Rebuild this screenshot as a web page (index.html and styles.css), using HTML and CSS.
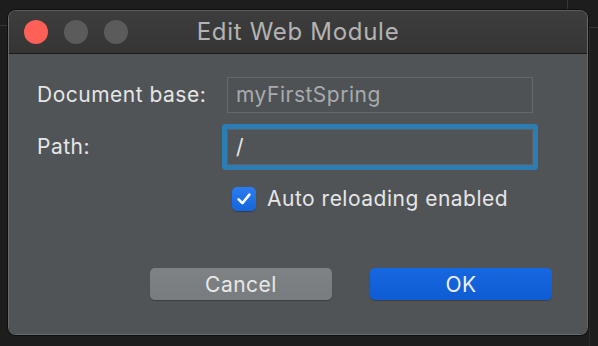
FILE: index.html
```html
<!DOCTYPE html>
<html lang="en">
<head>
  <meta charset="UTF-8">
  <title>Edit Web Module</title>
  <link rel="stylesheet" href="styles.css">
</head>
<body>
  <div class="backdrop">
    <div class="line line-left"></div>
    <div class="line line-top"></div>
    <div class="line line-right-h"></div>
    <div class="line line-right-v"></div>
  </div>

  <div class="window">
    <div class="titlebar">
      <div class="lights">
        <span class="light close"></span>
        <span class="light"></span>
        <span class="light"></span>
      </div>
      <div class="title">Edit Web Module</div>
    </div>

    <div class="body">
      <div class="form">
        <label class="label">Document base:</label>
        <div class="field readonly">myFirstSpring</div>

        <label class="label">Path:</label>
        <div class="field focused">/</div>

        <div class="check-row">
          <span class="checkbox">
            <svg width="18" height="18" viewBox="0 0 18 18">
              <path d="M3.6 9.4 L7.4 13.2 L14.4 4.6" fill="none" stroke="#fff" stroke-width="2.6" stroke-linecap="round" stroke-linejoin="round"/>
            </svg>
          </span>
          <span class="check-label">Auto reloading enabled</span>
        </div>
      </div>

      <div class="buttons">
        <button class="btn cancel">Cancel</button>
        <button class="btn ok">OK</button>
      </div>
    </div>
  </div>
</body>
</html>
```

FILE: styles.css
```css
* {
  box-sizing: border-box;
  margin: 0;
  padding: 0;
}

body {
  background-color: #1d1d1d;
  width: 598px;
  height: 346px;
  overflow: hidden;
  font-family: "Inter", "Liberation Sans", sans-serif;
  position: relative;
}

.backdrop {
  position: absolute;
  inset: 0;

  & > .line {
    position: absolute;
    background-color: #363636;
  }

  & > .line-left {
    left: 0;
    top: 25px;
    width: 8px;
    height: 1px;
  }

  & > .line-top {
    left: 567px;
    top: 0;
    width: 1px;
    height: 10px;
  }

  & > .line-right-h {
    left: 588px;
    top: 27px;
    width: 10px;
    height: 1px;
  }

  & > .line-right-v {
    left: 589px;
    top: 27px;
    width: 1px;
    height: 319px;
    background-color: #2a2a2a;
  }
}

.window {
  position: relative;
  margin: 10px 0 0 8px;
  width: 580px;
  height: 325px;
  border-radius: 8px;
  overflow: hidden;
  display: flex;
  flex-direction: column;
  box-shadow: 0 0 0 1px #0e0e0e;
  border: 1px solid #686b6d;
  border-top-color: #5c5c5c;

  & > .titlebar {
    height: 43px;
    flex-shrink: 0;
    background: linear-gradient(#3d3d3d, #353535);
    border-bottom: 1px solid #191919;
    display: flex;
    align-items: center;
    position: relative;

    & > .lights {
      display: flex;
      gap: 16px;
      padding-left: 15px;
      margin-top: -1px;

      & > .light {
        width: 24px;
        height: 24px;
        border-radius: 999px;
        background-color: #5b5b5b;
      }

      & > .close {
        background-color: #fe5f57;
      }
    }

    & > .title {
      position: absolute;
      left: 0;
      right: 0;
      text-align: center;
      font-size: 24px;
      color: #b3b3b3;
      letter-spacing: 0.7px;
      margin-top: -1px;
    }
  }

  & > .body {
    flex: 1;
    background-color: #505457;
    padding: 23px 35px 0 28px;
    display: flex;
    flex-direction: column;

    & > .form {
      display: grid;
      grid-template-columns: 190px 306px;
      row-gap: 16px;
      align-items: center;

      .label {
        font-size: 21px;
        letter-spacing: 0.5px;
        color: #e6e6e6;
        margin-top: -2px;
      }

      .field {
        height: 36px;
        border: 1px solid #65696c;
        padding: 0 8px;
        font-size: 21px;
        letter-spacing: 0.5px;
        line-height: 34px;
        color: #e8e8e8;
      }

      .readonly {
        color: #a9abad;
        background-color: #4e5255;
      }

      .focused {
        border-color: #5d6164;
        box-shadow: 0 0 0 5px #2b7db3;
        border-radius: 1px;
      }

      & > .check-row {
        grid-column: 2;
        display: flex;
        align-items: center;
        gap: 11px;
        padding-left: 5px;
        margin-top: 5px;

        & > .checkbox {
          width: 24px;
          height: 24px;
          border-radius: 5px;
          background: linear-gradient(#2a7cf0, #1566dc);
          display: flex;
          align-items: center;
          justify-content: center;
          box-shadow: 0 1px 1px rgba(0, 0, 0, 0.3);
        }

        & > .check-label {
          font-size: 21px;
          letter-spacing: 0.5px;
          color: #e6e6e6;
        }
      }
    }

    & > .buttons {
      display: flex;
      justify-content: flex-end;
      gap: 38px;
      margin-top: 57px;

      & > .btn {
        width: 182px;
        height: 32px;
        border: none;
        border-radius: 5px;
        font-family: "Inter", "Liberation Sans", sans-serif;
        font-size: 21px;
        letter-spacing: 0.5px;
        color: #e8e8e8;
        box-shadow: 0 1px 1px rgba(0, 0, 0, 0.25);
      }

      & > .cancel {
        background: linear-gradient(#7f8284, #797c7e);
      }

      & > .ok {
        background: linear-gradient(#1668e0, #0f5cd4);
        color: #f0f0f0;
      }
    }
  }
}
```
